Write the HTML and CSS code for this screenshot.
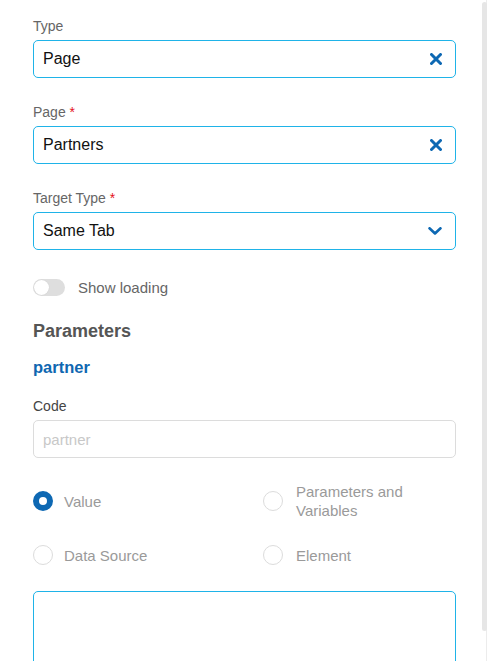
FILE: index.html
```html
<!DOCTYPE html>
<html lang="en">
<head>
<meta charset="utf-8">
<title>Link settings</title>
<link rel="stylesheet" href="styles.css">
</head>
<body>
<div class="panel">
  <div class="field">
    <label class="label">Type</label>
    <div class="control active">
      <span class="value">Page</span>
      <svg class="icon-x" width="12" height="12" viewBox="0 0 12 12"><path d="M1.5 1.5 L10.5 10.5 M10.5 1.5 L1.5 10.5" stroke="currentColor" stroke-width="3" stroke-linecap="round"/></svg>
    </div>
  </div>
  <div class="field">
    <label class="label">Page <span class="req">*</span></label>
    <div class="control active">
      <span class="value">Partners</span>
      <svg class="icon-x" width="12" height="12" viewBox="0 0 12 12"><path d="M1.5 1.5 L10.5 10.5 M10.5 1.5 L1.5 10.5" stroke="currentColor" stroke-width="3" stroke-linecap="round"/></svg>
    </div>
  </div>
  <div class="field">
    <label class="label">Target Type <span class="req">*</span></label>
    <div class="control active">
      <span class="value">Same Tab</span>
      <svg class="icon-chev" width="14" height="8" viewBox="0 0 14 8"><path d="M1.5 1.3 L7 6.5 L12.5 1.3" fill="none" stroke="currentColor" stroke-width="2.6" stroke-linecap="round" stroke-linejoin="round"/></svg>
    </div>
  </div>

  <div class="toggle-row">
    <span class="toggle"><span class="knob"></span></span>
    <span class="toggle-text">Show loading</span>
  </div>

  <h2 class="heading">Parameters</h2>
  <div class="param-name">partner</div>

  <div class="field code-field">
    <label class="label dark">Code</label>
    <div class="control plain">
      <span class="placeholder">partner</span>
    </div>
  </div>

  <div class="radios">
    <div class="radio-item"><span class="radio checked"></span><span class="radio-text">Value</span></div>
    <div class="radio-item alt"><span class="radio"></span><span class="radio-text">Parameters and<br>Variables</span></div>
    <div class="radio-item"><span class="radio"></span><span class="radio-text">Data Source</span></div>
    <div class="radio-item alt"><span class="radio"></span><span class="radio-text">Element</span></div>
  </div>

  <div class="textarea"></div>
</div>
<div class="scroll-track"></div>
<div class="scroll-thumb"></div>
</body>
</html>
```

FILE: styles.css
```css
html, body {
  margin: 0;
  padding: 0;
  background: #fff;
  overflow: hidden;
}
body {
  font-family: "Liberation Sans", Arial, sans-serif;
  color: #111;
}
.panel {
  padding: 16px 31px 0 33px;
}
.field {
  margin-bottom: 24px;
}
.label {
  display: block;
  font-size: 14px;
  line-height: 20px;
  color: #666;
  margin-bottom: 4px;
}
.label.dark {
  color: #444;
}
.req {
  color: #e4121b;
}
.control {
  box-sizing: border-box;
  height: 38px;
  border: 1px solid #1fb3e8;
  border-radius: 5px;
  display: flex;
  align-items: center;
  justify-content: space-between;
  padding: 0 13px 0 9px;
  font-size: 16px;
}
.control.plain {
  border-color: #dcdcdc;
}
.value {
  color: #111;
}
.placeholder {
  color: #c8c8c8;
  font-size: 15px;
}
.icon-x, .icon-chev {
  color: #0d68b3;
  display: block;
}
.toggle-row {
  margin-top: 27px;
  display: flex;
  align-items: center;
  height: 20px;
  gap: 13px;
}
.toggle {
  width: 32px;
  height: 17px;
  border-radius: 9px;
  background: #dedede;
  position: relative;
  display: block;
}
.knob {
  position: absolute;
  left: 1px;
  top: 1px;
  width: 15px;
  height: 15px;
  border-radius: 50%;
  background: #fff;
  box-shadow: 0 0 1px rgba(0,0,0,0.15);
}
.toggle-text {
  font-size: 15px;
  color: #666;
}
.heading {
  margin: 22px 0 0;
  font-size: 18px;
  line-height: 24px;
  font-weight: bold;
  color: #555;
}
.param-name {
  margin-top: 13px;
  font-size: 16.5px;
  line-height: 22px;
  font-weight: bold;
  color: #0f67b1;
}
.code-field {
  margin-top: 18px;
  margin-bottom: 24px;
}
.radios {
  display: grid;
  grid-template-columns: 230px 1fr;
  row-gap: 25px;
  align-items: center;
}
.radio-item {
  display: flex;
  align-items: center;
  gap: 11px;
}
.radio-item.alt {
  gap: 13px;
}
.radio {
  box-sizing: border-box;
  width: 20px;
  height: 20px;
  border-radius: 50%;
  border: 1.5px solid #dcdcdc;
  flex: none;
  background: #fff;
}
.radio.checked {
  border: 6px solid #0d68b3;
}
.radio-text {
  font-size: 15px;
  line-height: 19px;
  color: #9a9a9a;
}
.textarea {
  box-sizing: border-box;
  margin-top: 26px;
  height: 110px;
  border: 1px solid #1fb3e8;
  border-radius: 5px;
}
.scroll-track {
  position: fixed;
  right: 0;
  top: 0;
  width: 1px;
  height: 100%;
  background: #ececec;
}
.scroll-thumb {
  position: fixed;
  right: 0;
  top: 2px;
  width: 5px;
  height: 629px;
  background: #e6e6e6;
  border-radius: 3px;
}
```
